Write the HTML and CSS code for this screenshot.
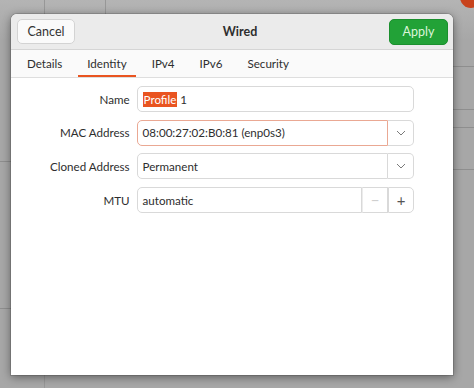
FILE: index.html
```html
<!DOCTYPE html>
<html lang="en">
<head>
    <meta charset="UTF-8">
    <meta name="viewport" content="width=device-width, initial-scale=1.0">
    <title>Wired</title>
    <link rel="stylesheet" href="styles.css">
</head>
<body>
  <div class="desktop">
    <!-- window edges behind the dialog -->
    <span class="vline" style="left:44px"></span>
    <span class="vline" style="left:105px;height:14px"></span>
    <span class="hline right" style="top:66px"></span>
    <span class="hline right" style="top:109px"></span>
    <span class="hline right" style="top:127px"></span>
    <span class="hline right" style="top:169px"></span>
    <span class="hline left" style="top:161px"></span>
    <span class="hline left" style="top:308px"></span>
    <span class="dot"></span>

    <div class="dialog">
      <div class="header">
        <button class="btn cancel">Cancel</button>
        <div class="title">Wired</div>
        <button class="btn apply">Apply</button>
      </div>
      <div class="tabs">
        <div class="tab">Details</div>
        <div class="tab active">Identity</div>
        <div class="tab">IPv4</div>
        <div class="tab">IPv6</div>
        <div class="tab">Security</div>
      </div>
      <div class="form">
        <label>Name</label>
        <div class="entry"><span class="text"><span class="sel">Profile</span> 1</span></div>

        <label>MAC Address</label>
        <div class="combo">
          <span class="text focus">08:00:27:02:B0:81 (enp0s3)</span>
          <span class="side last"><svg width="10" height="6" viewBox="0 0 10 6"><path d="M1 1l4 4 4-4" fill="none" stroke="#7a7a7a" stroke-width="1"/></svg></span>
        </div>

        <label>Cloned Address</label>
        <div class="combo">
          <span class="text">Permanent</span>
          <span class="side last"><svg width="10" height="6" viewBox="0 0 10 6"><path d="M1 1l4 4 4-4" fill="none" stroke="#7a7a7a" stroke-width="1"/></svg></span>
        </div>

        <label>MTU</label>
        <div class="combo">
          <span class="text">automatic</span>
          <span class="side off">&minus;</span>
          <span class="side last">+</span>
        </div>
      </div>
    </div>
  </div>
</body>
</html>
```

FILE: styles.css
```css
*{
  margin:0;
  padding:0;
  box-sizing: border-box;
}
body{
  width: 474px;
  height: 388px;
  overflow: hidden;
  font-family: "Lato", "Noto Sans", sans-serif;
  font-size: 11.6px;
  color: #2e2e2e;
}
.desktop{
  position: relative;
  width: 474px;
  height: 388px;
  background: linear-gradient(#b4b4b4, #a7a7a7 40px);
  padding: 14px 0 0 11px;
}
.vline{
  position: absolute;
  top: 0;
  width: 1px;
  height: 388px;
  background: #979797;
}
.hline{
  position: absolute;
  height: 1px;
  background: #8e8e8e;
}
.hline.right{
  left: 453px;
  right: 0;
}
.hline.left{
  left: 0;
  width: 11px;
}
.dot{
  position: absolute;
  right: -8px;
  top: -14px;
  width: 22px;
  height: 22px;
  border-radius: 50%;
  background: #c8431d;
}
.dialog{
  position: relative;
  width: 442px;
  height: 361px;
  background: #ffffff;
  border-radius: 6px 6px 0 0;
  box-shadow: 0 2px 10px rgba(0,0,0,0.45), 0 0 0 1px rgba(0,0,0,0.12);
  overflow: hidden;
}
.header{
  height: 36px;
  background: #ebebeb;
  border-bottom: 1px solid #d5d5d5;
  display: flex;
  align-items: center;
  padding: 0 5px 0 6px;
}
.btn{
  font-family: inherit;
  font-size: 12.5px;
  height: 25px;
  border-radius: 5px;
}
.cancel{
  width: 58px;
  background: #fafafa;
  border: 1px solid #d3d3d3;
  color: #333;
}
.apply{
  width: 59px;
  height: 26px;
  background: #22a237;
  border: 1px solid #1b8f2e;
  color: #dcf5da;
}
.title{
  flex: 1;
  text-align: center;
  font-weight: bold;
  font-size: 12.5px;
  padding-left: 16px;
}
.tabs{
  height: 28px;
  background: #fafafa;
  border-bottom: 1px solid #dedede;
  display: flex;
  gap: 7px;
  padding-left: 7px;
}
.tab{
  padding: 2px 9px 0;
  line-height: 24px;
  border-bottom: 2px solid transparent;
}
.tab.active{
  border-bottom-color: #e95420;
}
.form{
  display: grid;
  grid-template-columns: auto 1fr;
  column-gap: 7px;
  row-gap: 7.7px;
  padding: 8px 39px 0 39px;
  align-items: center;
}
.form label{
  text-align: right;
}
.entry, .combo{
  height: 26px;
  display: flex;
  align-items: stretch;
}
.entry{
  border: 1px solid #d9d9d9;
  border-radius: 5px;
}
.text{
  flex: 1;
  padding-left: 5px;
  display: flex;
  align-items: center;
}
.combo .text{
  border: 1px solid #d9d9d9;
  border-radius: 5px 0 0 5px;
}
.combo .text.focus{
  border-color: #eaa893;
}
.sel{
  background: #e95420;
  color: #fff;
  padding: 1px 1px;
  margin-right: 3px;
}
.side{
  width: 26px;
  border: 1px solid #d9d9d9;
  border-left: none;
  display: flex;
  align-items: center;
  justify-content: center;
  font-size: 15px;
  color: #555;
}
.side.last{
  border-radius: 0 5px 5px 0;
}
.side.off{
  color: #cfcfcf;
  border-left: 1px solid #ececec;
}
.side.off + .side{
  border-left: 1px solid #d9d9d9;
}
```
